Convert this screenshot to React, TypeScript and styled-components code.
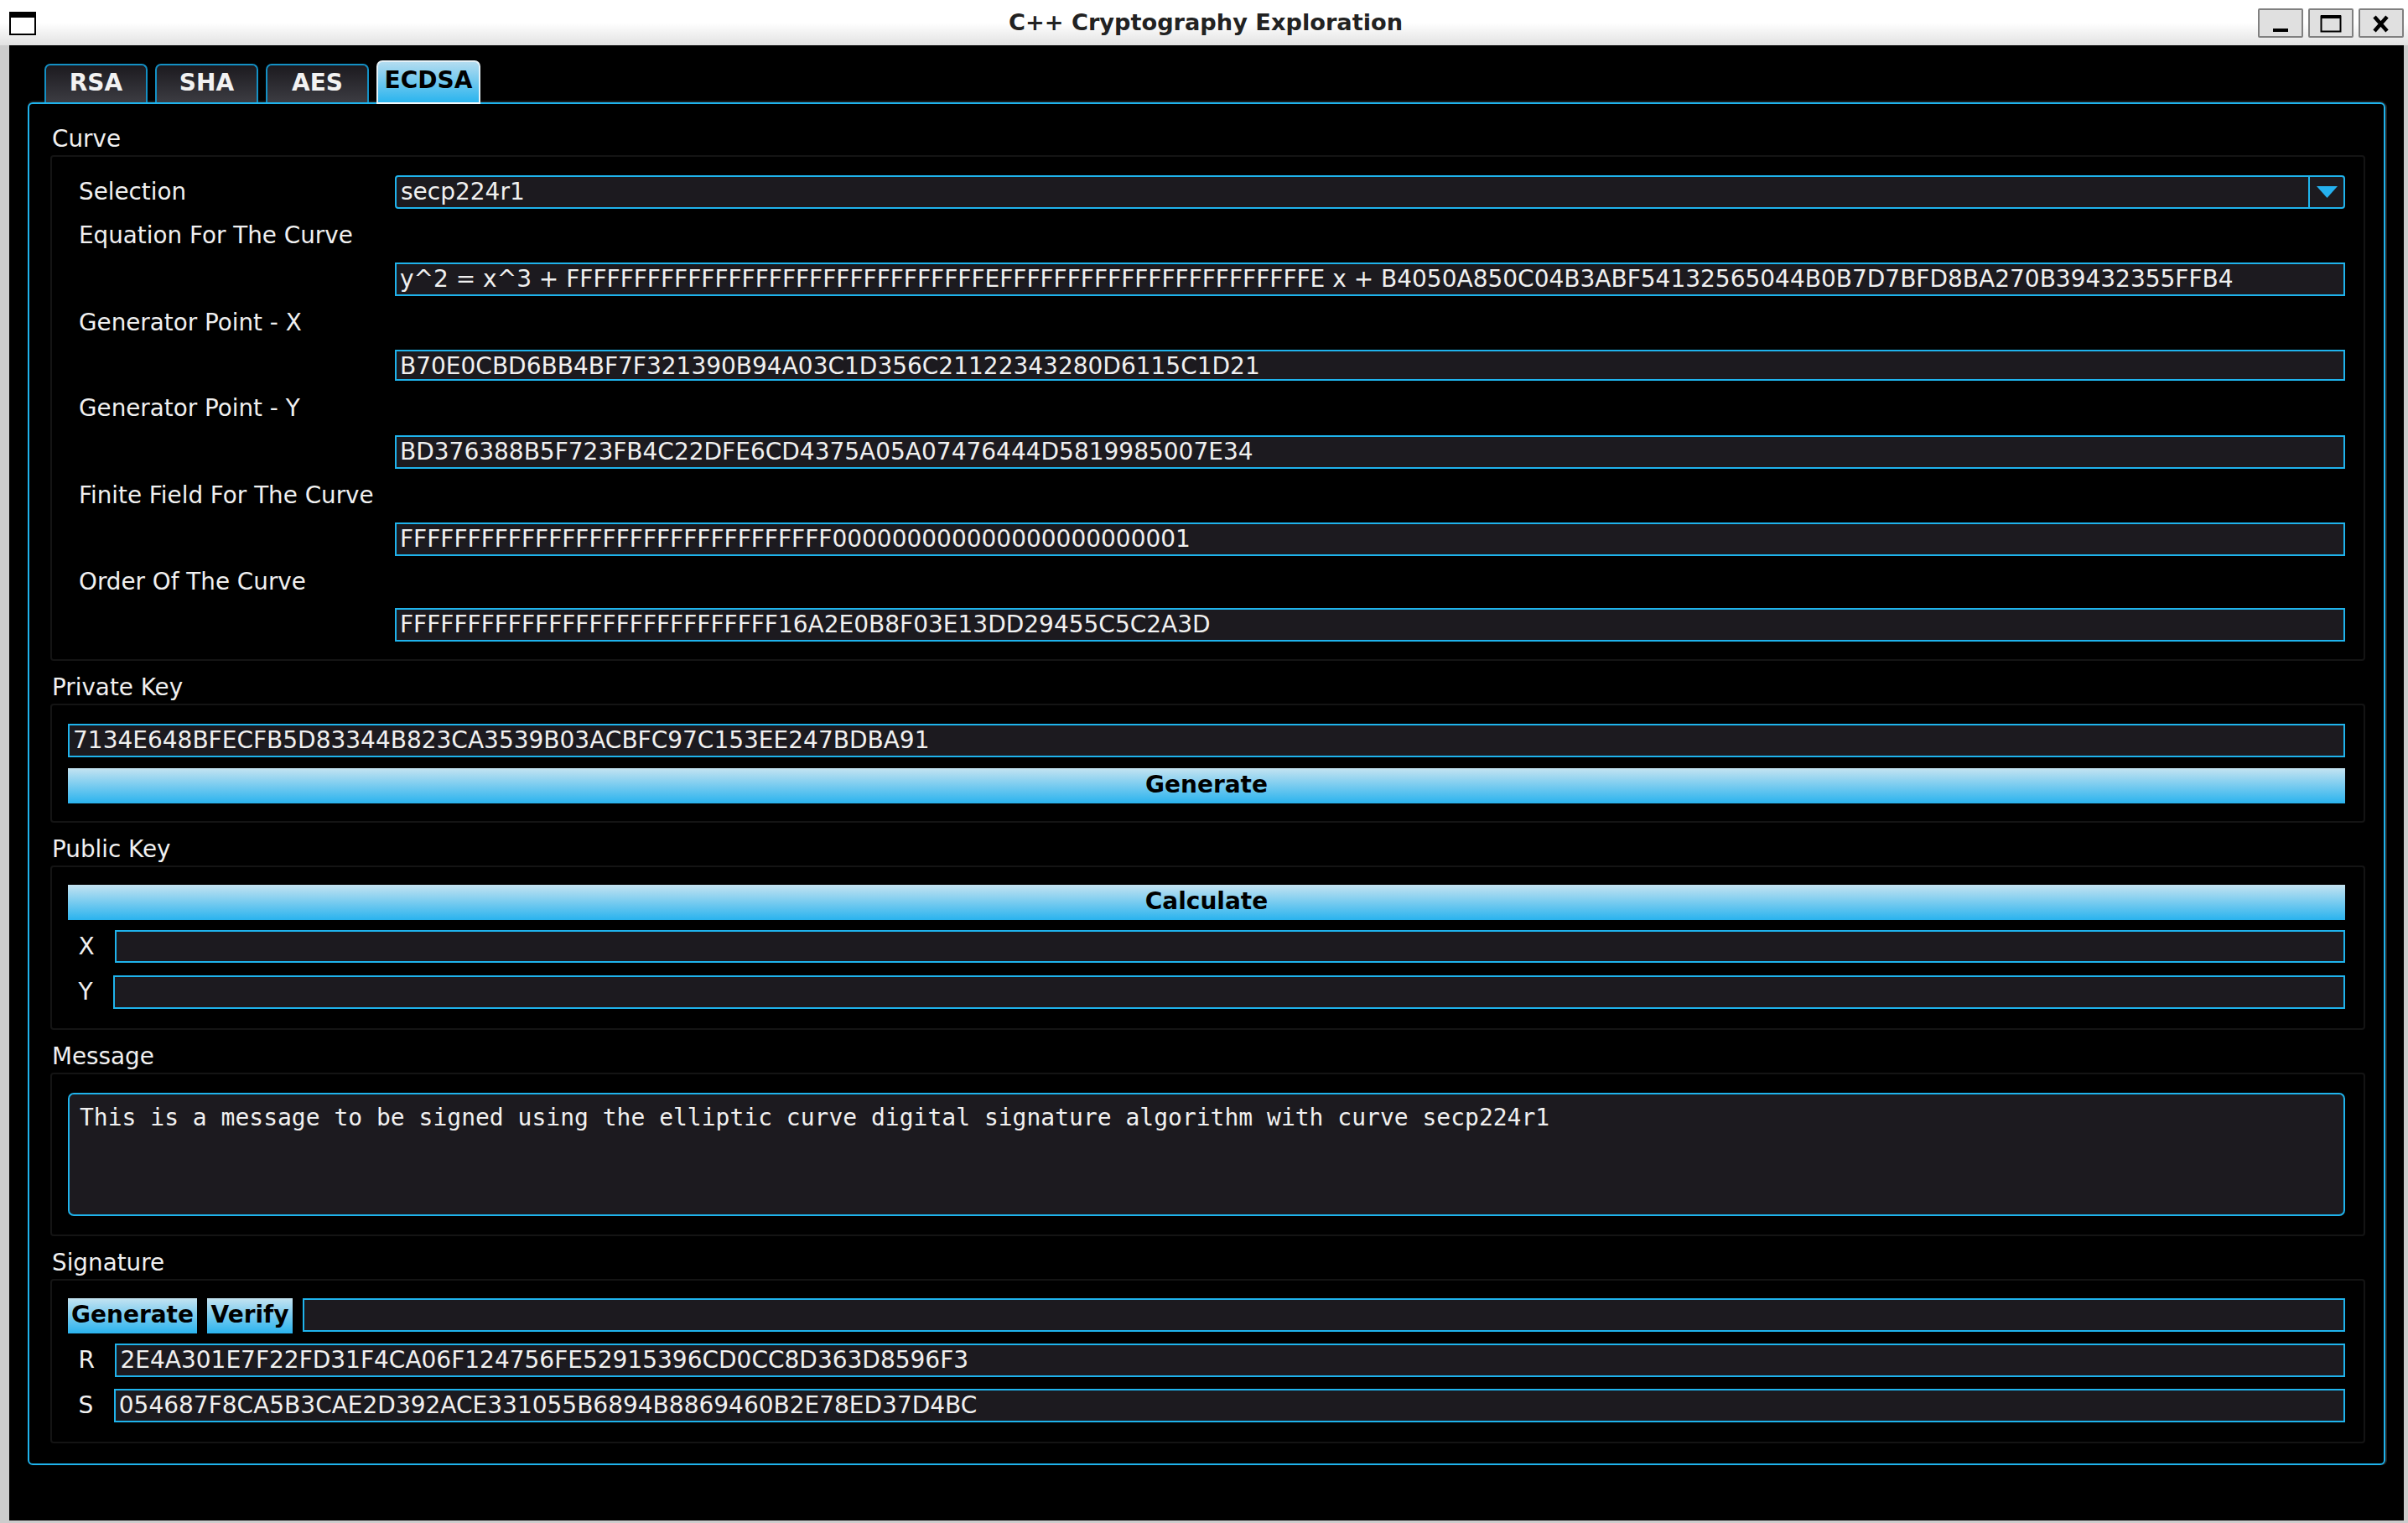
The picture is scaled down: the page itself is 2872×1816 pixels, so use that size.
import React from "react";
import styled, { createGlobalStyle } from "styled-components";

const BLUE = "#1fb3ec";
const FIELD = "#1c1a1f";
const TEXT = "#f0f0f0";

const Global = createGlobalStyle`
  html, body { margin: 0; padding: 0; background: #000; }
  body { font-family: "DejaVu Sans", sans-serif; font-size: 28px; color: ${TEXT}; overflow: hidden; }
  * { box-sizing: border-box; }
`;

const Window = styled.div`
  width: 2872px;
  height: 1816px;
  display: flex;
  flex-direction: column;
`;

const TitleBar = styled.header`
  height: 54px;
  flex: none;
  position: relative;
  display: flex;
  align-items: flex-start;
  justify-content: space-between;
  padding: 10px 5px 0 11px;
  background: linear-gradient(180deg, #ffffff 0%, #ffffff 50%, #e2e2e2 100%);
`;

const WindowIcon = styled.svg`
  width: 32px;
  height: 28px;
  margin-top: 4px;
  display: block;
`;

const Title = styled.h1`
  position: absolute;
  left: 4px;
  right: 0;
  top: 0;
  height: 52px;
  margin: 0;
  display: flex;
  align-items: center;
  justify-content: center;
  font-size: 27.2px;
  font-weight: 700;
  color: #222;
  pointer-events: none;
`;

const Controls = styled.div`
  display: flex;
  gap: 6px;
  position: relative;
`;

const Control = styled.div`
  width: 54px;
  height: 35px;
  background: #e0e0e0;
  border: 2px solid #808080;
  border-radius: 2px;
  display: flex;
  align-items: center;
  justify-content: center;
`;

const ControlGlyph = styled.svg`
  width: 50px;
  height: 31px;
  display: block;
`;

const Client = styled.main`
  flex: 1;
  min-height: 0;
  background: #000;
  border-left: 11px solid #cccccc;
  border-right: 5px solid #cccccc;
  border-bottom: 3px solid #cccccc;
  padding: 18px 22px 0 22px;
`;

const TabBar = styled.nav`
  height: 50px;
  display: flex;
  align-items: flex-end;
  padding-left: 20px;
  gap: 9px;
  position: relative;
  z-index: 1;
`;

const Tab = styled.div<{ $active?: boolean }>`
  width: ${(p) => (p.$active ? 124 : 123)}px;
  height: ${(p) => (p.$active ? 52 : 46)}px;
  margin-bottom: ${(p) => (p.$active ? -2 : 0)}px;
  padding-bottom: ${(p) => (p.$active ? 6 : 4)}px;
  display: flex;
  align-items: center;
  justify-content: center;
  font-weight: 700;
  font-size: 28px;
  border-radius: 7px 7px 0 0;
  color: ${(p) => (p.$active ? "#000" : "#f2f2f2")};
  background: ${(p) =>
    p.$active
      ? "linear-gradient(180deg, #b3dcf0 0%, #2ab4ee 100%)"
      : "linear-gradient(180deg, #1c1a1f 0%, #3c3c42 100%)"};
  border: 2px solid ${(p) => (p.$active ? "#e6f2f8" : "#1490c4")};
  border-bottom: ${(p) => (p.$active ? "2px solid #f4f8fa" : "none")};
`;

const Pane = styled.section`
  height: 1625px;
  border: 2px solid ${BLUE};
  border-radius: 6px;
  box-shadow: 2px 0 0 #222, 0 -2px 0 #1a1a1a;
  padding: 22px 22px 0 25px;
  display: flex;
  flex-direction: column;
  gap: 12px;
`;

const Section = styled.div`
  display: flex;
  flex-direction: column;
`;

const SectionTitle = styled.div`
  height: 39px;
  line-height: 39px;
  padding-left: 2px;
  font-size: 27.8px;
`;

const Group = styled.div<{ $top?: number; $bottom?: number }>`
  border: 2px solid #141414;
  border-radius: 4px;
  padding: ${(p) => p.$top ?? 22}px 22px ${(p) => p.$bottom ?? 21}px 19px;
  display: flex;
  flex-direction: column;
`;

const FormGrid = styled.div`
  display: grid;
  grid-template-columns: 390px 1fr;
  row-gap: 12px;
`;

const FormLabel = styled.div<{ $wide?: boolean; $h?: number }>`
  grid-column: ${(p) => (p.$wide ? "1 / -1" : "1")};
  height: ${(p) => p.$h ?? 40}px;
  line-height: ${(p) => p.$h ?? 40}px;
  padding-left: 13px;
  font-size: 27.8px;
  white-space: nowrap;
`;

const Field = styled.div<{ $h?: number; $grow?: boolean; $pt?: number }>`
  grid-column: 2;
  flex: ${(p) => (p.$grow ? 1 : "none")};
  height: ${(p) => p.$h ?? 40}px;
  background: ${FIELD};
  border: 2px solid ${BLUE};
  padding: ${(p) => p.$pt ?? 0}px 4px 2px;
  display: flex;
  align-items: center;
  white-space: nowrap;
  overflow: hidden;
  color: ${TEXT};
`;

const Combo = styled.div`
  grid-column: 2;
  height: 40px;
  background: ${FIELD};
  border: 2px solid ${BLUE};
  border-radius: 4px;
  display: flex;
  align-items: center;
`;

const ComboText = styled.div`
  flex: 1;
  padding: 0 0 2px 5px;
`;

const ComboButton = styled.div`
  width: 42px;
  height: 100%;
  border-left: 2px solid ${BLUE};
  display: flex;
  align-items: center;
  justify-content: center;
`;

const ComboArrow = styled.svg`
  width: 25px;
  height: 14px;
  display: block;
`;

const Button = styled.div<{ $h?: number; $w?: number; $mt?: number }>`
  height: ${(p) => p.$h ?? 42}px;
  width: ${(p) => (p.$w ? `${p.$w}px` : "auto")};
  margin-top: ${(p) => p.$mt ?? 0}px;
  padding-bottom: 3px;
  flex: none;
  background: linear-gradient(180deg, #c4e3f1 0%, #2ab3ee 100%);
  color: #000;
  font-weight: 700;
  display: flex;
  align-items: center;
  justify-content: center;
  white-space: nowrap;
`;

const Row = styled.div<{ $mt?: number; $gap?: number }>`
  display: flex;
  align-items: flex-start;
  gap: ${(p) => p.$gap ?? 0}px;
  margin-top: ${(p) => p.$mt ?? 0}px;
`;

const RowLabel = styled.div<{ $h?: number }>`
  flex: none;
  height: ${(p) => p.$h ?? 40}px;
  line-height: ${(p) => p.$h ?? 40}px;
  padding-left: 12.5px;
  margin-right: 24.5px;
`;

const TextArea = styled.div`
  height: 147px;
  background: ${FIELD};
  border: 2px solid ${BLUE};
  border-radius: 7px;
  padding: 10px 12px;
  font-family: "DejaVu Sans Mono", monospace;
  font-size: 28px;
  line-height: 36px;
  white-space: pre-wrap;
  color: ${TEXT};
`;

const CURVE_ROWS = [
  { label: "Equation For The Curve", value: "y^2 = x^3 + FFFFFFFFFFFFFFFFFFFFFFFFFFFFFFFEFFFFFFFFFFFFFFFFFFFFFFFE x + B4050A850C04B3ABF54132565044B0B7D7BFD8BA270B39432355FFB4" },
  { label: "Generator Point - X", value: "B70E0CBD6BB4BF7F321390B94A03C1D356C21122343280D6115C1D21", h: 37, pt: 3 },
  { label: "Generator Point - Y", value: "BD376388B5F723FB4C22DFE6CD4375A05A07476444D5819985007E34", lh: 41 },
  { label: "Finite Field For The Curve", value: "FFFFFFFFFFFFFFFFFFFFFFFFFFFFFFFF000000000000000000000001" },
  { label: "Order Of The Curve", value: "FFFFFFFFFFFFFFFFFFFFFFFFFFFF16A2E0B8F03E13DD29455C5C2A3D", lh: 38 },
];

export default function App() {
  return (
    <Window>
      <Global />
      <TitleBar>
        <WindowIcon viewBox="0 0 32 28">
          <rect x="1" y="1" width="30" height="26" fill="#fff" stroke="#000" strokeWidth="2" />
          <rect x="0" y="0" width="32" height="7" fill="#000" />
        </WindowIcon>
        <Title>C++ Cryptography Exploration</Title>
        <Controls>
          <Control>
            <ControlGlyph viewBox="0 0 50 31">
              <rect x="16" y="22" width="18" height="4" fill="#000" />
            </ControlGlyph>
          </Control>
          <Control>
            <ControlGlyph viewBox="0 0 50 31">
              <rect x="13.5" y="7.5" width="23" height="18" fill="none" stroke="#000" strokeWidth="2" />
              <rect x="13" y="6" width="24" height="4" fill="#000" />
            </ControlGlyph>
          </Control>
          <Control>
            <ControlGlyph viewBox="0 0 50 31">
              <path d="M17 8 L32 25 M32 8 L17 25" stroke="#000" strokeWidth="4.5" fill="none" />
            </ControlGlyph>
          </Control>
        </Controls>
      </TitleBar>
      <Client>
        <TabBar>
          <Tab>RSA</Tab>
          <Tab>SHA</Tab>
          <Tab>AES</Tab>
          <Tab $active>ECDSA</Tab>
        </TabBar>
        <Pane>
          <Section>
            <SectionTitle>Curve</SectionTitle>
            <Group>
              <FormGrid>
                <FormLabel>Selection</FormLabel>
                <Combo>
                  <ComboText>secp224r1</ComboText>
                  <ComboButton>
                    <ComboArrow viewBox="0 0 25 14">
                      <path d="M0 0 H25 L12.5 14 Z" fill="#25b0ee" />
                    </ComboArrow>
                  </ComboButton>
                </Combo>
                {CURVE_ROWS.map((r) => (
                  <React.Fragment key={r.label}>
                    <FormLabel $wide $h={r.lh}>{r.label}</FormLabel>
                    <Field $h={r.h} $pt={r.pt}>{r.value}</Field>
                  </React.Fragment>
                ))}
              </FormGrid>
            </Group>
          </Section>
          <Section>
            <SectionTitle>Private Key</SectionTitle>
            <Group>
              <Field>7134E648BFECFB5D83344B823CA3539B03ACBFC97C153EE247BDBA91</Field>
              <Button $mt={13}>Generate</Button>
            </Group>
          </Section>
          <Section>
            <SectionTitle>Public Key</SectionTitle>
            <Group $top={21} $bottom={23}>
              <Button>Calculate</Button>
              <Row $mt={12}>
                <RowLabel $h={39}>X</RowLabel>
                <Field $grow $h={39} />
              </Row>
              <Row $mt={15}>
                <RowLabel>Y</RowLabel>
                <Field $grow />
              </Row>
            </Group>
          </Section>
          <Section>
            <SectionTitle>Message</SectionTitle>
            <Group $bottom={22}>
              <TextArea>This is a message to be signed using the elliptic curve digital signature algorithm with curve secp224r1</TextArea>
            </Group>
          </Section>
          <Section>
            <SectionTitle>Signature</SectionTitle>
            <Group $top={21} $bottom={23}>
              <Row $gap={12}>
                <Button $w={154}>Generate</Button>
                <Button $w={102}>Verify</Button>
                <Field $grow />
              </Row>
              <Row $mt={12}>
                <RowLabel>R</RowLabel>
                <Field $grow>2E4A301E7F22FD31F4CA06F124756FE52915396CD0CC8D363D8596F3</Field>
              </Row>
              <Row $mt={14}>
                <RowLabel>S</RowLabel>
                <Field $grow>054687F8CA5B3CAE2D392ACE331055B6894B8869460B2E78ED37D4BC</Field>
              </Row>
            </Group>
          </Section>
        </Pane>
      </Client>
    </Window>
  );
}
